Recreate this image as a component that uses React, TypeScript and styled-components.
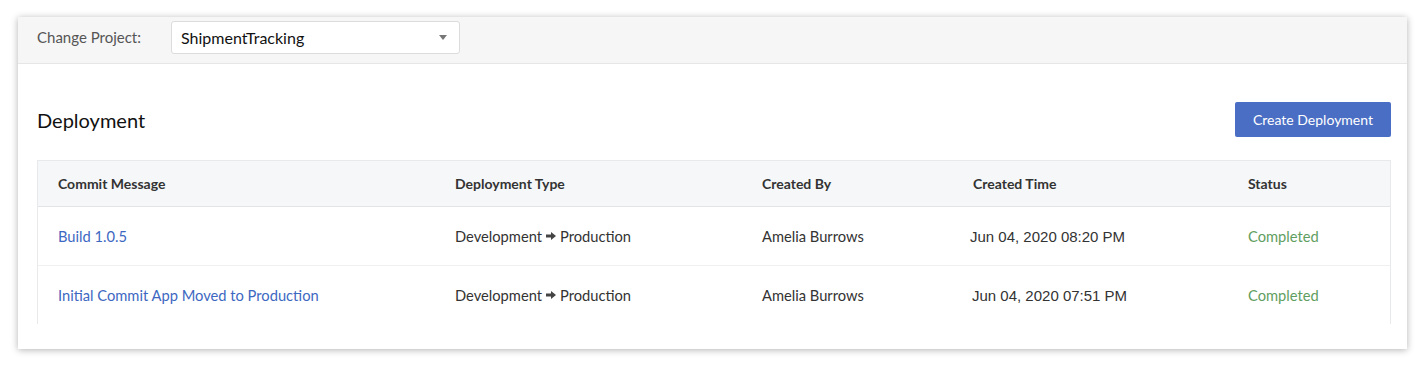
import React from 'react';
import styled, { createGlobalStyle } from 'styled-components';

const GlobalStyle = createGlobalStyle`
  body {
    margin: 0;
    background: #fff;
    font-family: Lato, 'Open Sans', sans-serif;
    color: #333;
  }
  #root {
    padding: 17px 18px 19px;
  }
`;

const Card = styled.div`
  width: 1389px;
  background: #fff;
  box-shadow: 0 1px 7px rgba(0, 0, 0, 0.3);
  display: flex;
  flex-direction: column;
`;

const TopBar = styled.div`
  display: flex;
  align-items: center;
  gap: 30px;
  height: 47px;
  padding: 0 0 5px 19px;
  box-sizing: border-box;
  background: #f6f6f6;
  border-bottom: 1px solid #e6e6e6;
`;

const Label = styled.span`
  font-size: 15px;
  color: #555;
  margin-top: -2px;
`;

const Select = styled.div`
  width: 289px;
  height: 33px;
  box-sizing: border-box;
  background: #fff;
  border: 1px solid #dcdcdc;
  border-radius: 3px;
  display: flex;
  align-items: center;
  justify-content: space-between;
  padding: 0 12px 0 9px;
  font-size: 16px;
  color: #111;
`;

const Caret = styled.span`
  width: 0;
  height: 0;
  border-left: 4px solid transparent;
  border-right: 4px solid transparent;
  border-top: 5px solid #777;
`;

const Body = styled.div`
  padding: 38px 16px 25px 19px;
`;

const HeadRow = styled.div`
  display: flex;
  align-items: center;
  justify-content: space-between;
  height: 35px;
  margin-bottom: 23px;
`;

const Title = styled.h2`
  margin: 0;
  font-size: 20px;
  font-weight: 400;
  color: #111;
`;

const PrimaryButton = styled.button`
  width: 156px;
  height: 35px;
  border: none;
  border-radius: 2px;
  background: #4a6ec4;
  color: #fff;
  font-family: Lato, sans-serif;
  font-size: 14px;
  cursor: pointer;
`;

const Table = styled.div`
  border: 1px solid #e8e9eb;
  border-bottom: none;
`;

const Row = styled.div<{ $head?: boolean }>`
  display: grid;
  grid-template-columns: 397px 307px 211px 275px 1fr;
  align-items: center;
  padding-left: 20px;
  height: ${(p) => (p.$head ? '45px' : '58px')};
  background: ${(p) => (p.$head ? '#f6f7f9' : '#fff')};
  border-bottom: 1px solid ${(p) => (p.$head ? '#e2e4e7' : '#f0f0f0')};
  font-size: ${(p) => (p.$head ? '14px' : '14.7px')};
  font-weight: ${(p) => (p.$head ? 700 : 400)};
  color: #333;
  &:last-child {
    border-bottom: none;
  }
`;

const CommitLink = styled.a`
  color: #3d68c2;
  text-decoration: none;
`;

const TypeCell = styled.span`
  display: flex;
  align-items: center;
  gap: 4px;
`;

const TimeCell = styled.span<{ $shift?: number }>`
  font-family: 'Liberation Sans', Arial, sans-serif;
  font-size: 15px;
  margin-left: ${(p) => p.$shift ?? 0}px;
`;

const Status = styled.span`
  color: #5f9e5f;
`;

const Arrow = () => (
  <svg width="10" height="8" viewBox="0 0 10 8">
    <path d="M0 2.6h5V0l5 4-5 4V5.4H0z" fill="#444" />
  </svg>
);

const rows = [
  { msg: 'Build 1.0.5', time: 'Jun 04, 2020 08:20 PM', shift: -3 },
  { msg: 'Initial Commit App Moved to Production', time: 'Jun 04, 2020 07:51 PM', shift: -1 },
];

const App = () => (
  <>
    <GlobalStyle />
    <Card>
      <TopBar>
        <Label>Change Project:</Label>
        <Select>
          ShipmentTracking
          <Caret />
        </Select>
      </TopBar>
      <Body>
        <HeadRow>
          <Title>Deployment</Title>
          <PrimaryButton>Create Deployment</PrimaryButton>
        </HeadRow>
        <Table>
          <Row $head>
            <span>Commit Message</span>
            <span>Deployment Type</span>
            <span>Created By</span>
            <span>Created Time</span>
            <span>Status</span>
          </Row>
          {rows.map((r) => (
            <Row key={r.msg}>
              <CommitLink href="#">{r.msg}</CommitLink>
              <TypeCell>
                Development <Arrow /> Production
              </TypeCell>
              <span>Amelia Burrows</span>
              <TimeCell $shift={r.shift}>{r.time}</TimeCell>
              <Status>Completed</Status>
            </Row>
          ))}
        </Table>
      </Body>
    </Card>
  </>
);

export default App;
